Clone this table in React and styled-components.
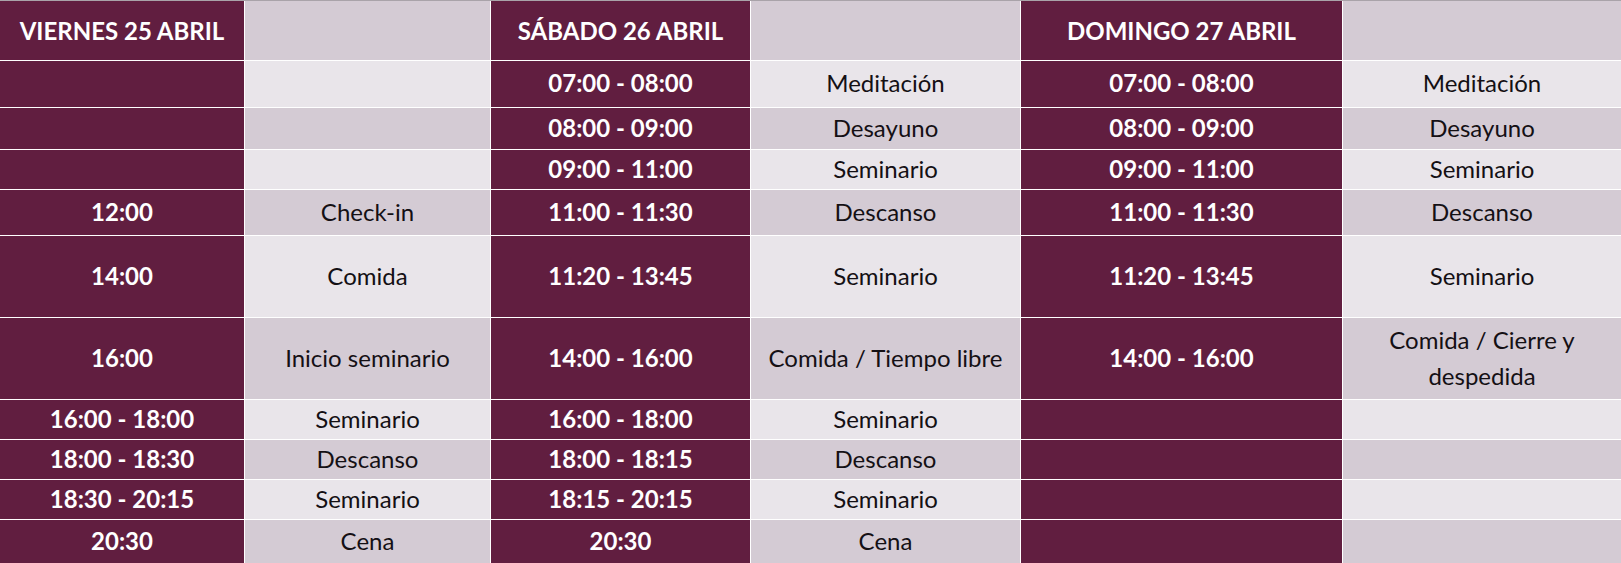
import React from "react";
import styled, { createGlobalStyle } from "styled-components";

const GlobalStyle = createGlobalStyle`
  html, body {
    margin: 0;
    padding: 0;
    background: #ffffff;
  }
  body {
    font-family: Lato, "Open Sans", sans-serif;
  }
`;

const PURPLE = "#611e40";
const LIGHT = "#e9e5ea";
const SHADE = "#d4cbd4";

const Table = styled.div`
  display: grid;
  grid-template-columns: 244px 245px 259px 269px 321px 278px;
  grid-template-rows: 59px 46px 41px 39px 45px 81px 81px 39px 39px 39px 43px;
  gap: 1px;
  width: 1621px;
  background: #ffffff;
  border-top: 1px solid #a9a3a9;
`;

const Cell = styled.div`
  display: flex;
  align-items: center;
  justify-content: center;
  text-align: center;
  padding: 0 12px 2px;
  font-size: 24px;
  line-height: 36px;
  background: ${(p) => (p.$time ? PURPLE : p.$shade ? SHADE : LIGHT)};
  color: ${(p) => (p.$time ? "#ffffff" : "#141014")};
  font-weight: ${(p) => (p.$time ? 700 : 400)};
`;

const HeadCell = styled(Cell)`
  padding: 0 12px;
`;

const days = [
  {
    title: "VIERNES 25 ABRIL",
    rows: [
      ["", ""],
      ["", ""],
      ["", ""],
      ["12:00", "Check-in"],
      ["14:00", "Comida"],
      ["16:00", "Inicio seminario"],
      ["16:00 - 18:00", "Seminario"],
      ["18:00 - 18:30", "Descanso"],
      ["18:30 - 20:15", "Seminario"],
      ["20:30", "Cena"],
    ],
  },
  {
    title: "SÁBADO 26 ABRIL",
    rows: [
      ["07:00 - 08:00", "Meditación"],
      ["08:00 - 09:00", "Desayuno"],
      ["09:00 - 11:00", "Seminario"],
      ["11:00 - 11:30", "Descanso"],
      ["11:20 - 13:45", "Seminario"],
      ["14:00 - 16:00", "Comida / Tiempo libre"],
      ["16:00 - 18:00", "Seminario"],
      ["18:00 - 18:15", "Descanso"],
      ["18:15 - 20:15", "Seminario"],
      ["20:30", "Cena"],
    ],
  },
  {
    title: "DOMINGO 27 ABRIL",
    rows: [
      ["07:00 - 08:00", "Meditación"],
      ["08:00 - 09:00", "Desayuno"],
      ["09:00 - 11:00", "Seminario"],
      ["11:00 - 11:30", "Descanso"],
      ["11:20 - 13:45", "Seminario"],
      ["14:00 - 16:00", "Comida / Cierre y despedida"],
      ["", ""],
      ["", ""],
      ["", ""],
      ["", ""],
    ],
  },
];

export default function App() {
  const rowCount = days[0].rows.length;
  const cells = [];

  days.forEach((day, d) => {
    cells.push(
      <HeadCell key={`h-${d}`} $time>
        {day.title}
      </HeadCell>
    );
    cells.push(<HeadCell key={`hs-${d}`} $shade />);
  });

  for (let r = 0; r < rowCount; r++) {
    const shade = r % 2 === 1;
    days.forEach((day, d) => {
      const [time, activity] = day.rows[r];
      cells.push(
        <Cell key={`t-${r}-${d}`} $time>
          {time}
        </Cell>
      );
      cells.push(
        <Cell key={`a-${r}-${d}`} $shade={shade}>
          {activity}
        </Cell>
      );
    });
  }

  return (
    <>
      <GlobalStyle />
      <Table>{cells}</Table>
    </>
  );
}
